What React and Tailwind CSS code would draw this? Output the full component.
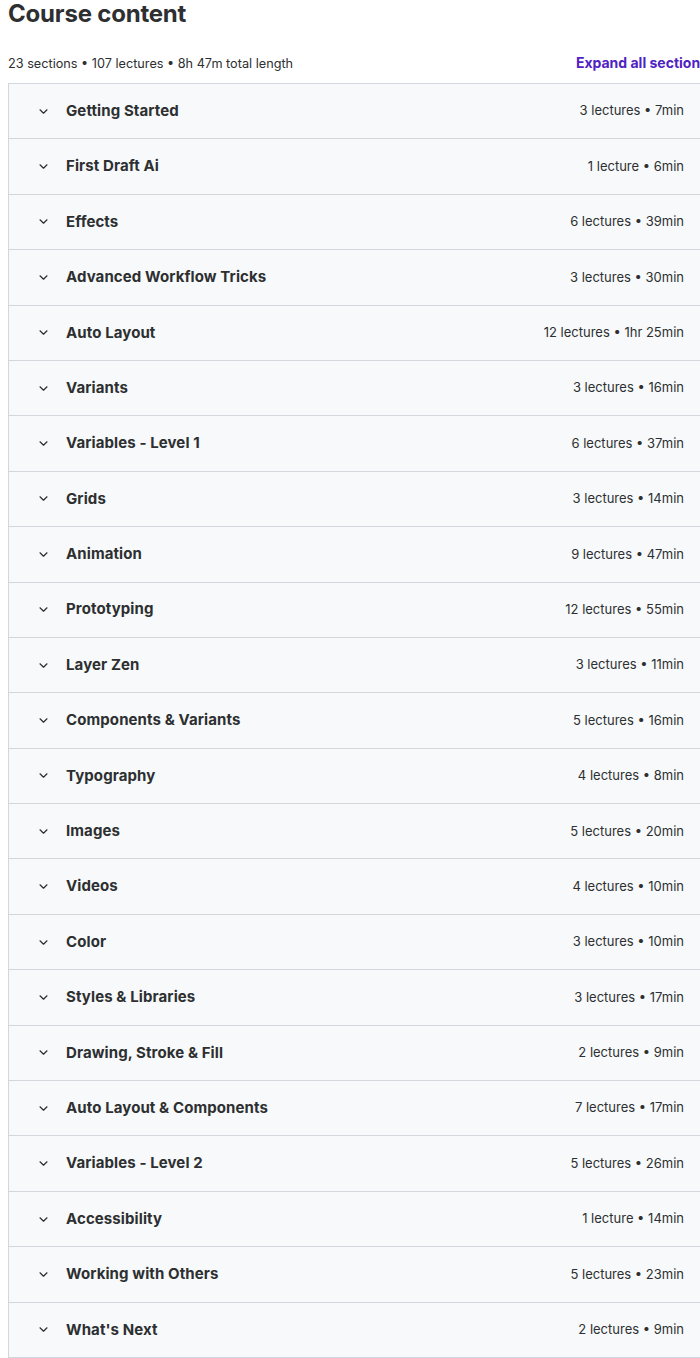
import React from "react";

const sections = [
  ["Getting Started", "3 lectures • 7min"],
  ["First Draft Ai", "1 lecture • 6min"],
  ["Effects", "6 lectures • 39min"],
  ["Advanced Workflow Tricks", "3 lectures • 30min"],
  ["Auto Layout", "12 lectures • 1hr 25min"],
  ["Variants", "3 lectures • 16min"],
  ["Variables - Level 1", "6 lectures • 37min"],
  ["Grids", "3 lectures • 14min"],
  ["Animation", "9 lectures • 47min"],
  ["Prototyping", "12 lectures • 55min"],
  ["Layer Zen", "3 lectures • 11min"],
  ["Components & Variants", "5 lectures • 16min"],
  ["Typography", "4 lectures • 8min"],
  ["Images", "5 lectures • 20min"],
  ["Videos", "4 lectures • 10min"],
  ["Color", "3 lectures • 10min"],
  ["Styles & Libraries", "3 lectures • 17min"],
  ["Drawing, Stroke & Fill", "2 lectures • 9min"],
  ["Auto Layout & Components", "7 lectures • 17min"],
  ["Variables - Level 2", "5 lectures • 26min"],
  ["Accessibility", "1 lecture • 14min"],
  ["Working with Others", "5 lectures • 23min"],
  ["What's Next", "2 lectures • 9min"],
];

function Chevron() {
  return (
    <svg width="9" height="5" viewBox="0 0 9 5" fill="none" className="shrink-0">
      <path d="M1 0.8l3.5 3.4 3.5-3.4" stroke="#2d2f31" strokeWidth="1.2" strokeLinecap="round" strokeLinejoin="round" />
    </svg>
  );
}

export default function App() {
  return (
    <div
      className="w-[700px] h-[1358px] overflow-hidden bg-white text-[#2d2f31]"
      style={{ fontFamily: "Inter, 'Noto Sans', sans-serif" }}
    >
      <div className="w-[708px] pl-2">
        {/* HEADER */}
        <h2 className="text-[24px] leading-[28px] font-bold tracking-[-0.2px]">Course content</h2>
        <div className="flex items-end justify-between mt-[24px] pb-[10px]">
          <span className="text-[12.7px] text-[#2d2f31]">23 sections • 107 lectures • 8h 47m total length</span>
          <span className="text-[14px] font-bold text-[#5022c3]">Expand all sections</span>
        </div>

        {/* SECTIONS */}
        <div className="border-t border-l border-[#d1d7dc]">
          {sections.map(([title, stats]) => (
            <div
              key={title}
              className="h-[55.4px] flex items-center bg-[#f7f9fa] border-b border-[#d1d7dc] pl-[30px] pr-[24px]"
            >
              <Chevron />
              <span className="ml-[18px] text-[15px] font-bold text-[#2d2f31] tracking-[0.1px]">{title}</span>
              <span className="ml-auto text-[13px] text-[#2d2f31]">{stats}</span>
            </div>
          ))}
        </div>
      </div>
    </div>
  );
}
